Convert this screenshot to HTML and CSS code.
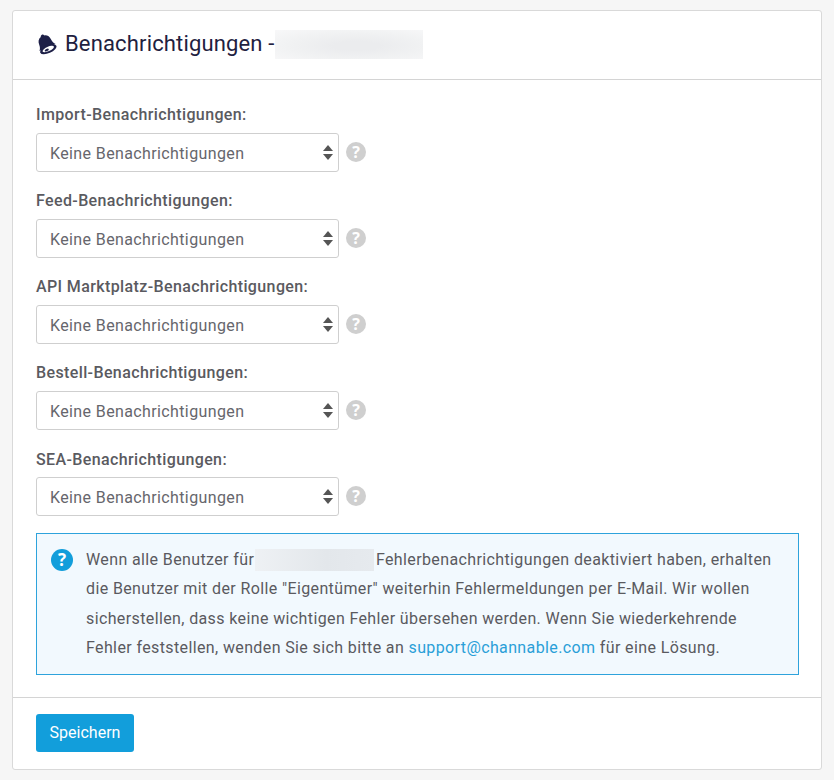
FILE: index.html
```html
<!DOCTYPE html>
<html lang="de">
<head>
<meta charset="utf-8">
<title>Benachrichtigungen</title>
<link rel="stylesheet" href="styles.css">
</head>
<body>
<section class="card">
  <header class="card-head">
    <svg class="bell" viewBox="0 0 20 20" width="22" height="22" aria-hidden="true">
      <g transform="rotate(-24 10 10)">
        <path fill="#1d1f47" d="M10 .8c.9 0 1.600.6 1.700 1.400 2.700.7 4.100 3 4.200 5.900.1 2.300.8 3.900 2.100 5.400H2c1.300-1.500 2-3.100 2.100-5.400.1-2.900 1.500-5.200 4.200-5.900.1-.8.8-1.400 1.700-1.400z"/>
        <ellipse cx="10" cy="15.200" rx="8" ry="3.600" fill="#1d1f47"/>
        <ellipse cx="10" cy="15" rx="5.600" ry="2" fill="#fff"/>
        <ellipse cx="8.400" cy="15.300" rx="2" ry="1" fill="#1d1f47"/>
      </g>
    </svg>
    <h1 class="title">Benachrichtigungen -</h1>
    <span class="redact redact-title"></span>
  </header>
  <div class="card-body">
    <div class="field">
      <label class="label">Import-Benachrichtigungen:</label>
      <div class="row">
        <div class="select">Keine Benachrichtigungen<span class="carets"></span></div>
        <span class="help">?</span>
      </div>
    </div>
    <div class="field">
      <label class="label">Feed-Benachrichtigungen:</label>
      <div class="row">
        <div class="select">Keine Benachrichtigungen<span class="carets"></span></div>
        <span class="help">?</span>
      </div>
    </div>
    <div class="field">
      <label class="label">API Marktplatz-Benachrichtigungen:</label>
      <div class="row">
        <div class="select">Keine Benachrichtigungen<span class="carets"></span></div>
        <span class="help">?</span>
      </div>
    </div>
    <div class="field">
      <label class="label">Bestell-Benachrichtigungen:</label>
      <div class="row">
        <div class="select">Keine Benachrichtigungen<span class="carets"></span></div>
        <span class="help">?</span>
      </div>
    </div>
    <div class="field">
      <label class="label label-low">SEA-Benachrichtigungen:</label>
      <div class="row">
        <div class="select">Keine Benachrichtigungen<span class="carets"></span></div>
        <span class="help">?</span>
      </div>
    </div>
    <div class="notice">
      <span class="notice-icon">?</span>
      <p class="notice-text">Wenn alle Benutzer für <span class="redact redact-inline"></span> Fehlerbenachrichtigungen deaktiviert haben, erhalten die Benutzer mit der Rolle "Eigentümer" weiterhin Fehlermeldungen per E-Mail. Wir wollen sicherstellen, dass keine wichtigen Fehler übersehen werden. Wenn Sie wiederkehrende Fehler feststellen, wenden Sie sich bitte an <a class="link" href="#">support@channable.com</a> für eine Lösung.</p>
    </div>
  </div>
  <footer class="card-foot">
    <button class="btn" type="button">Speichern</button>
  </footer>
</section>
</body>
</html>
```

FILE: styles.css
```css
* { box-sizing: border-box; }
html, body { height: 100%; }
body {
  margin: 0;
  padding: 10px 12px 0;
  background: #f6f6f6;
  font-family: Roboto, "Liberation Sans", sans-serif;
  color: #5f5f66;
  overflow: hidden;
}
.card {
  background: #fff;
  border: 1px solid #d9d9d9;
  border-radius: 3px;
  height: 760px;
  display: flex;
  flex-direction: column;
}
.card-head {
  height: 69px;
  border-bottom: 1px solid #d4d4d4;
  display: flex;
  align-items: center;
  padding: 0 0 2px 22px;
}
.bell { flex: none; margin-right: 8px; }
.title {
  margin: 0;
  font-size: 22px;
  font-weight: 400;
  letter-spacing: .15px;
  color: #1f2140;
  line-height: 30px;
}
.redact {
  display: inline-block;
}
.redact-title {
  width: 148px;
  height: 29px;
  margin-left: 1px;
  background: radial-gradient(ellipse at 55% 55%, #ebecee 20%, #f1f2f3 60%, #f8f8f9 100%);
}
.redact-inline {
  width: 119px;
  height: 22px;
  margin: 0 -2px 0 -4px;
  vertical-align: -6px;
  background: linear-gradient(90deg, #eef1f4, #e3e7eb 60%, #e6eaee);
}
.card-body {
  flex: 1;
  padding: 23px 23px 0;
}
.field { height: 86px; }
.label {
  display: block;
  font-size: 16px;
  font-weight: 500;
  letter-spacing: .38px;
  line-height: 23px;
  color: #5a5a60;
  margin-bottom: 7px;
}
.label-low { padding-top: 1px; margin-bottom: 6px; }
.row { display: flex; align-items: center; }
.select {
  position: relative;
  width: 303px;
  height: 38.500px;
  border: 1px solid #cfcfcf;
  border-radius: 3px;
  background: #fff;
  padding: 1px 0 0 13px;
  font-size: 16px;
  letter-spacing: .38px;
  line-height: 37px;
  color: #66666c;
}
.carets {
  position: absolute;
  right: 5px;
  top: 11px;
  width: 10px;
  height: 15px;
}
.carets::before, .carets::after {
  content: "";
  position: absolute;
  left: 0;
  border-left: 5px solid transparent;
  border-right: 5px solid transparent;
}
.carets::before { top: 0; border-bottom: 6px solid #555; }
.carets::after { bottom: 0; border-top: 6px solid #555; }
.help {
  width: 20px;
  height: 20px;
  border-radius: 50%;
  margin-left: 7px;
  background: #cfcfcf;
  color: #fff;
  font: 700 16px/20px "Open Sans", "Liberation Sans", sans-serif;
  text-align: center;
}
.notice {
  display: flex;
  height: 142px;
  background: #f2f9fe;
  border: 1px solid #2ea3dc;
  padding: 11px 8px 0 14px;
  width: 763px;
}
.notice-icon {
  flex: none;
  width: 22px;
  height: 22px;
  margin-top: 4px;
  border-radius: 50%;
  background: #129edb;
  color: #fff;
  font: 700 17px/22px "Open Sans", "Liberation Sans", sans-serif;
  text-align: center;
}
.notice-text {
  width: 692px;
  flex: none;
  margin: 0 0 0 13px;
  font-size: 16px;
  letter-spacing: .38px;
  line-height: 29.400px;
  color: #5a5a60;
}
.link { color: #2a9fd8; text-decoration: none; }
.card-foot {
  height: 72px;
  border-top: 1px solid #d4d4d4;
  padding: 16px 23px 0;
}
.btn {
  display: block;
  width: 98px;
  height: 38px;
  border: 0;
  border-radius: 3px;
  background: #129edb;
  color: #fff;
  font: 400 16px/37px Roboto, "Liberation Sans", sans-serif;
  padding: 0 0 1px;
}
```
